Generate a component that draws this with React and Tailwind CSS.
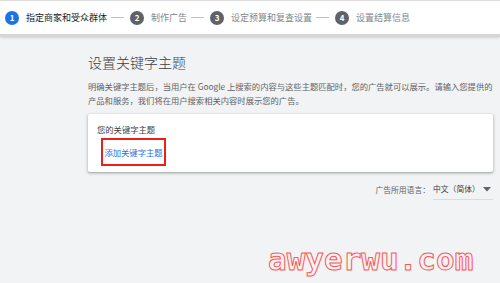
import React from 'react';

const steps = [
  { n: 1, label: '指定商家和受众群体', active: true },
  { n: 2, label: '制作广告' },
  { n: 3, label: '设定预算和复查设置' },
  { n: 4, label: '设置结算信息' },
];

export default function App() {
  return (
    <div
      className="relative h-[283px] w-[500px] overflow-hidden bg-[#f1f3f4]"
      style={{ fontFamily: '"Noto Sans CJK SC", "Liberation Sans", sans-serif' }}
    >
      <div className="flex h-[37px] items-center border-t border-[#dcdcdc] border-b-[3px] border-b-[#d6d6d6] bg-white pl-[5px] shadow-sm">
        {steps.map((s, i) => (
          <div key={s.n} className="flex items-center">
            {i > 0 && <div className="mr-[6px] ml-[4px] h-px w-[13px] bg-[#bdc1c6]" />}
            <div
              className={`flex h-[14px] w-[14px] items-center justify-center rounded-full text-[8px] font-bold text-white ${
                s.active ? 'bg-[#1a73e8]' : 'bg-[#5f6368]'
              }`}
            >
              {s.n}
            </div>
            <span className={`ml-[7px] text-[9px] ${s.active ? 'text-[#202124]' : 'text-[#80868b]'}`}>
              {s.label}
            </span>
          </div>
        ))}
      </div>

      <div className="ml-[88px] w-[405px] pt-[13px]">
        <h1 className="text-[14px] leading-[24px] font-light text-[#3c4043]">设置关键字主题</h1>
        <p className="mt-[5px] w-[412px] text-[8.3px] leading-[14px] text-[#5f6368]">
          明确关键字主题后，当用户在 Google 上搜索的内容与这些主题匹配时，您的广告就可以展示。请输入您提供的产品和服务，我们将在用户搜索相关内容时展示您的广告。
        </p>

        <div className="mt-[7px] h-[58px] rounded-[2px] bg-white pl-[9px] pt-[8px] shadow-[0_1px_2px_rgba(60,64,67,0.3),0_1px_3px_1px_rgba(60,64,67,0.15)]">
          <div className="text-[8.3px] leading-[14px] text-[#3c4043]">您的关键字主题</div>
          <div className="mt-[2px] ml-[4px] flex h-[28px] w-[65px] items-center justify-center border-2 border-[#e8221b] text-[8.3px] whitespace-nowrap text-[#1a73e8]">
            添加关键字主题
          </div>
        </div>

        <div className="mt-[7px] flex items-center justify-end text-[7.8px] text-[#5f6368]">
          <span>广告所用语言：</span>
          <div className="ml-[3px] flex h-[21px] w-[60px] items-center justify-between border-b border-[#dadce0] text-[#3c4043]">
            <span className="whitespace-nowrap">中文（简体）</span>
            <svg width="8" height="5" viewBox="0 0 8 5" className="mr-[2px]">
              <path d="M0 0h8L4 4.5z" fill="#5f6368" />
            </svg>
          </div>
        </div>
      </div>

      <div
        className="absolute left-[268px] top-[244px] text-[31px] font-bold leading-none text-transparent"
        style={{
          fontFamily: '"DejaVu Sans Mono", monospace',
          WebkitTextStroke: '1px #ff3b3b',
          opacity: 0.85,
        }}
      >
        awyerwu.com
      </div>
    </div>
  );
}
